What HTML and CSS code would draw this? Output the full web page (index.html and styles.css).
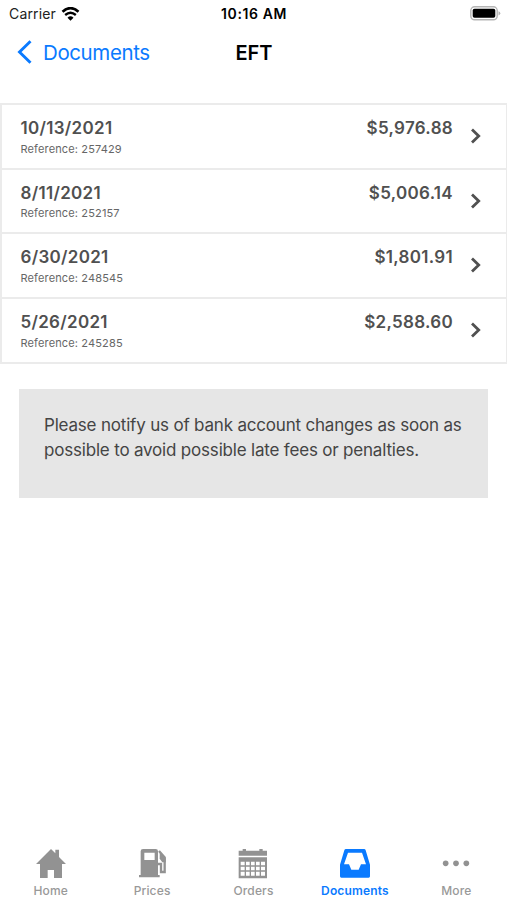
FILE: index.html
```
<!DOCTYPE html>
<html lang="en">
<head>
    <meta charset="UTF-8">
    <meta name="viewport" content="width=device-width, initial-scale=1.0">
    <title>EFT</title>
    <link rel="stylesheet" href="styles.css">
</head>
<body>

<div class="status-bar">
    <div class="status-left">
        <span class="carrier">Carrier</span>
        <svg class="wifi" width="19" height="14" viewBox="0 0 54 42">
            <path d="M3 14Q27 -7 51 14" fill="none" stroke="#000" stroke-width="8"/>
            <path d="M11 24Q27 10 43 24" fill="none" stroke="#000" stroke-width="7"/>
            <path d="M18 32Q27 24 36 32L27 41Z" fill="#000"/>
        </svg>
    </div>
    <div class="clock">10:16 AM</div>
    <div class="status-right">
        <svg width="31" height="15" viewBox="0 0 31 15">
            <rect x="0.8" y="0.8" width="26.4" height="13" rx="3.8" fill="#fff" stroke="#b5b5b5" stroke-width="1.4"/>
            <rect x="2.7" y="2.8" width="22.6" height="9" rx="1.8" fill="#000"/>
            <path d="M28.5 5.2Q30.3 5.8 30.3 7.3T28.5 9.4Z" fill="#b5b5b5"/>
        </svg>
    </div>
</div>

<header class="navbar">
    <a href="#" class="back-link">
        <svg width="15" height="24" viewBox="0 0 15 24">
            <path d="M13.5 1.2L2.5 12L13.5 22.8" fill="none" stroke="#0a7aff" stroke-width="2.9"/>
        </svg>
        <span class="back-text">Documents</span>
    </a>
    <h1 class="title">EFT</h1>
</header>

<main>
    <ul class="eft-list">
        <li class="eft-row">
            <div class="eft-info">
                <div class="eft-date">10/13/2021</div>
                <div class="eft-ref">Reference: 257429</div>
            </div>
            <div class="eft-amount">$5,976.88</div>
            <svg class="chevron" width="11" height="16" viewBox="0 0 11 16"><path d="M2 1.5L8.7 8L2 14.5"/></svg>
        </li>
        <li class="eft-row">
            <div class="eft-info">
                <div class="eft-date">8/11/2021</div>
                <div class="eft-ref">Reference: 252157</div>
            </div>
            <div class="eft-amount">$5,006.14</div>
            <svg class="chevron" width="11" height="16" viewBox="0 0 11 16"><path d="M2 1.5L8.7 8L2 14.5"/></svg>
        </li>
        <li class="eft-row">
            <div class="eft-info">
                <div class="eft-date">6/30/2021</div>
                <div class="eft-ref">Reference: 248545</div>
            </div>
            <div class="eft-amount">$1,801.91</div>
            <svg class="chevron" width="11" height="16" viewBox="0 0 11 16"><path d="M2 1.5L8.7 8L2 14.5"/></svg>
        </li>
        <li class="eft-row">
            <div class="eft-info">
                <div class="eft-date">5/26/2021</div>
                <div class="eft-ref">Reference: 245285</div>
            </div>
            <div class="eft-amount">$2,588.60</div>
            <svg class="chevron" width="11" height="16" viewBox="0 0 11 16"><path d="M2 1.5L8.7 8L2 14.5"/></svg>
        </li>
    </ul>

    <div class="notice">Please notify us of bank account changes as soon as possible to avoid possible late fees or penalties.</div>
</main>

<nav class="tab-bar">
    <a href="#" class="tab">
        <svg width="30" height="30" viewBox="0 0 90 90">
            <path d="M45 0L58 13V2H69V24L90 45H78V87H54V63H35V87H12V45H0Z"/>
        </svg>
        <span>Home</span>
    </a>
    <a href="#" class="tab">
        <svg width="30" height="30" viewBox="-6 0 90 90">
            <path fill-rule="evenodd" d="M12 0H50Q57 0 57 7V78H62V85H0V78H5V7Q5 0 12 0ZM16 11V33H47V11Z"/>
            <path d="M60 6L77 25V69H66V45H55" fill="none" stroke="#929292" stroke-width="7"/>
            <path d="M62 8L80 27V40H70L62 29Z"/>
        </svg>
        <span>Prices</span>
    </a>
    <a href="#" class="tab">
        <svg width="30" height="30" viewBox="0 0 90 90">
            <path d="M2 5H14V0H24V5H64V0H74V5H87V20H2Z"/>
            <path fill-rule="evenodd" d="M2 25H87V88H2ZM8 38V49H20V38ZM24 38V49H35V38ZM39 38V49H50V38ZM54 38V49H65V38ZM69 38V49H81V38ZM8 53V64H20V53ZM24 53V64H35V53ZM39 53V64H50V53ZM54 53V64H65V53ZM69 53V64H81V53ZM8 68V80H20V68ZM24 68V80H35V68ZM39 68V80H50V68ZM54 68V80H65V68ZM69 68V80H81V68Z"/>
        </svg>
        <span>Orders</span>
    </a>
    <a href="#" class="tab active">
        <svg width="30" height="30" viewBox="0 0 90 90">
            <path fill-rule="evenodd" d="M18 0H72Q76 0 77 4L90 47V82Q90 86 86 86H4Q0 86 0 82V47L13 4Q14 0 18 0ZM24 11L12 46H27L34 62H56L63 46H78L66 11Z"/>
        </svg>
        <span>Documents</span>
    </a>
    <a href="#" class="tab">
        <svg width="30" height="30" viewBox="0 0 90 90">
            <circle cx="14" cy="43" r="8.5"/>
            <circle cx="45" cy="43" r="8.5"/>
            <circle cx="76" cy="43" r="8.5"/>
        </svg>
        <span>More</span>
    </a>
</nav>

</body>
</html>
```
FILE: styles.css
```
* {
    box-sizing: border-box;
}

body {
    font-family: Inter, "Liberation Sans", sans-serif;
    background-color: #fff;
    margin: 0;
    height: 900px;
    display: flex;
    flex-direction: column;
    overflow: hidden;
}

a {
    text-decoration: none;
}

/* Status bar */
.status-bar {
    display: grid;
    grid-template-columns: 1fr auto 1fr;
    align-items: center;
    height: 27px;
    padding: 0 6px 0 9px;
}

.status-left {
    display: flex;
    align-items: center;
    gap: 5px;
}

.carrier {
    font-size: 14px;
    letter-spacing: 0.15px;
    color: #222;
}

.clock {
    font-size: 14px;
    font-weight: 600;
    letter-spacing: 0.6px;
    margin-right: 2px;
}

.status-right {
    display: flex;
    justify-content: flex-end;
}

/* Navbar */
.navbar {
    display: grid;
    grid-template-columns: 1fr auto 1fr;
    align-items: center;
    height: 50px;
    padding: 0 17px;
}

.back-link {
    display: flex;
    align-items: center;
    gap: 11px;
    color: #0a7aff;
    font-size: 20.5px;
    letter-spacing: -0.4px;
}

.title {
    margin: 2px 0 0 1px;
    font-size: 20px;
    font-weight: 600;
}

/* EFT list */
.eft-list {
    list-style: none;
    margin: 26px 0 0;
    padding: 0;
    border: 2px solid #ebebeb;
    border-right-width: 1px;
}

.eft-row {
    display: flex;
    height: 64.7px;
    padding: 13px 25px 0 18.5px;
    border-bottom: 2px solid #ebebeb;
    color: #505050;
}

.eft-row:last-child {
    border-bottom: none;
    height: 63px;
}

.eft-info {
    flex: 1;
}

.eft-date,
.eft-amount {
    font-size: 17px;
    font-weight: 600;
    line-height: 21.5px;
    letter-spacing: 0.3px;
}

.eft-ref {
    font-size: 11px;
    line-height: 14px;
    margin-top: 2px;
    letter-spacing: 0.14px;
    color: #666;
}

.chevron {
    margin: 10px 0 0 17px;
    fill: none;
    stroke: #505050;
    stroke-width: 2.8;
}

.notice {
    margin: 25px 19px 0;
    height: 109px;
    padding: 24px 20px 0 25px;
    background-color: #e6e6e6;
    color: #444;
    font-size: 17px;
    line-height: 25px;
    letter-spacing: -0.19px;
}

/* Bottom tabs */
.tab-bar {
    display: grid;
    grid-template-columns: repeat(5, 1fr);
    margin-top: auto;
    height: 51px;
}

.tab {
    display: flex;
    flex-direction: column;
    align-items: center;
    color: #999;
    fill: #929292;
    font-size: 12px;
    font-weight: 500;
    line-height: 14px;
    letter-spacing: 0.15px;
    gap: 5px;
}

.tab.active {
    color: #0a7aff;
    fill: #0a7aff;
    font-weight: 600;
}
```
